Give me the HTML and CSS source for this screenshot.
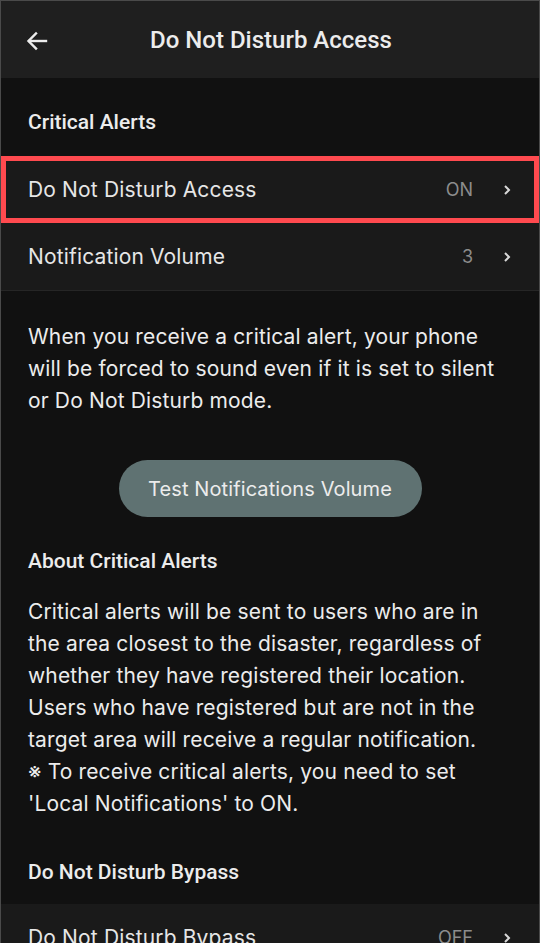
FILE: index.html
```html
<!DOCTYPE html>
<html lang="en">
<head>
<meta charset="utf-8">
<title>Do Not Disturb Access</title>
<link rel="stylesheet" href="styles.css">
</head>
<body>
<div class="screen">
  <header class="topbar">
    <button class="back" aria-label="Back">
      <svg width="24" height="24" viewBox="0 0 24 24" fill="none" stroke="#ececec" stroke-width="2.4" stroke-linecap="square" stroke-linejoin="miter"><path d="M21 12H4.5"/><path d="M11 4.5L3.5 12l7.5 7.5"/></svg>
    </button>
    <h1 class="title">Do Not Disturb Access</h1>
  </header>

  <h2 class="section-title">Critical Alerts</h2>
  <div class="list">
    <div class="row highlighted">
      <span class="label">Do Not Disturb Access</span>
      <span class="value">ON</span>
      <svg class="chev" width="10" height="14" viewBox="0 0 10 14" fill="none" stroke="#d8d8d8" stroke-width="2"><path d="M3 3l4 4-4 4"/></svg>
    </div>
    <div class="row">
      <span class="label">Notification Volume</span>
      <span class="value">3</span>
      <svg class="chev" width="10" height="14" viewBox="0 0 10 14" fill="none" stroke="#d8d8d8" stroke-width="2"><path d="M3 3l4 4-4 4"/></svg>
    </div>
  </div>

  <p class="desc">When you receive a critical alert, your phone will be forced to sound even if it is set to silent or Do Not Disturb mode.</p>

  <div class="btn-wrap"><button class="pill">Test Notifications Volume</button></div>

  <h2 class="section-title about">About Critical Alerts</h2>
  <p class="desc about-text">Critical alerts will be sent to users who are in the area closest to the disaster, regardless of whether they have registered their location. Users who have registered but are not in the target area will receive a regular notification.<br>※ To receive critical alerts, you need to set 'Local Notifications' to ON.</p>

  <h2 class="section-title bypass">Do Not Disturb Bypass</h2>
  <div class="list">
    <div class="row">
      <span class="label">Do Not Disturb Bypass</span>
      <span class="value">OFF</span>
      <svg class="chev" width="10" height="14" viewBox="0 0 10 14" fill="none" stroke="#d8d8d8" stroke-width="2"><path d="M3 3l4 4-4 4"/></svg>
    </div>
  </div>
</div>
</body>
</html>
```
FILE: styles.css
```css
html, body {
  margin: 0;
  padding: 0;
  background: #111111;
}
.screen {
  width: 540px;
  height: 943px;
  box-sizing: border-box;
  border: 1px solid #4a4a4a;
  border-bottom: none;
  overflow: hidden;
  background: #111111;
  font-family: Inter, "Noto Sans", sans-serif;
  color: #ececec;
}
.topbar {
  height: 77px;
  background: #1f1f1f;
  display: flex;
  align-items: center;
  justify-content: center;
  position: relative;
}
.back {
  position: absolute;
  left: 22px;
  top: 26px;
  background: none;
  border: 0;
  padding: 0;
  width: 28px;
  height: 28px;
  display: flex;
  align-items: center;
  justify-content: center;
}
.title {
  margin: 0 0 0 2px;
  font-family: Roboto, "Noto Sans", sans-serif;
  font-weight: 500;
  font-size: 24px;
  color: #ececec;
}
.section-title {
  margin: 0;
  font-family: Roboto, "Noto Sans", sans-serif;
  font-weight: 500;
  font-size: 21px;
  color: #ececec;
  padding: 32px 27px 0;
  height: 46px;
}
.list {
  background: #1a1a1a;
}
.row {
  height: 68px;
  box-sizing: border-box;
  display: flex;
  align-items: center;
  padding: 0 27px 0 27px;
  border-bottom: 1px solid #262626;
}
.row.highlighted {
  border: 5px solid #ff4a4f;
  padding: 0 22px 0 22px;
  height: 67px;
}
.label {
  flex: 1;
  font-size: 21px;
  letter-spacing: 0.15px;
  color: #e6e6e6;
}
.value {
  font-size: 18px;
  color: #8c8c8c;
  margin-right: 29px;
}
.chev {
  flex: none;
}
.desc {
  margin: 0;
  padding: 30px 27px 0;
  font-size: 21px;
  letter-spacing: 0.15px;
  line-height: 32px;
  color: #ececec;
}
.btn-wrap {
  display: flex;
  justify-content: center;
  padding-top: 43px;
}
.pill {
  width: 303px;
  height: 57px;
  border: 0;
  border-radius: 29px;
  background: #5f7272;
  color: #ececec;
  font-family: Inter, "Noto Sans", sans-serif;
  font-size: 20px;
  letter-spacing: 0.1px;
  padding: 0;
}
.section-title.about {
  padding-top: 32px;
  height: auto;
}
.about-text {
  padding-top: 23px;
}
.section-title.bypass {
  padding-top: 40px;
  height: 44px;
}
```
